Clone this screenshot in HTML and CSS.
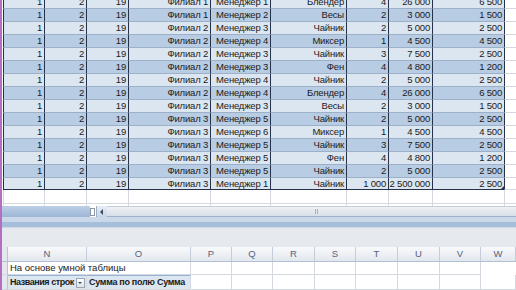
FILE: index.html
```html
<!DOCTYPE html>
<html>
<head>
<meta charset="utf-8">
<title>Сводная таблица</title>
<link rel="stylesheet" href="styles.css">
</head>
<body>
<div class="sheet">

  <div class="pane-top">
    <div class="tbl">
      <div class="tr odd"><div>1</div><div>2</div><div>19</div><div>Филиал 1</div><div>Менеджер 1</div><div>Блендер</div><div>4</div><div>26 000</div><div>6 500</div><div class="blank"></div></div>
      <div class="tr even"><div>1</div><div>2</div><div>19</div><div>Филиал 1</div><div>Менеджер 2</div><div>Весы</div><div>2</div><div>3 000</div><div>1 500</div><div class="blank"></div></div>
      <div class="tr odd"><div>1</div><div>2</div><div>19</div><div>Филиал 2</div><div>Менеджер 3</div><div>Чайник</div><div>2</div><div>5 000</div><div>2 500</div><div class="blank"></div></div>
      <div class="tr even"><div>1</div><div>2</div><div>19</div><div>Филиал 2</div><div>Менеджер 4</div><div>Миксер</div><div>1</div><div>4 500</div><div>4 500</div><div class="blank"></div></div>
      <div class="tr odd"><div>1</div><div>2</div><div>19</div><div>Филиал 2</div><div>Менеджер 3</div><div>Чайник</div><div>3</div><div>7 500</div><div>2 500</div><div class="blank"></div></div>
      <div class="tr even"><div>1</div><div>2</div><div>19</div><div>Филиал 2</div><div>Менеджер 3</div><div>Фен</div><div>4</div><div>4 800</div><div>1 200</div><div class="blank"></div></div>
      <div class="tr odd"><div>1</div><div>2</div><div>19</div><div>Филиал 2</div><div>Менеджер 4</div><div>Чайник</div><div>2</div><div>5 000</div><div>2 500</div><div class="blank"></div></div>
      <div class="tr even"><div>1</div><div>2</div><div>19</div><div>Филиал 2</div><div>Менеджер 4</div><div>Блендер</div><div>4</div><div>26 000</div><div>6 500</div><div class="blank"></div></div>
      <div class="tr odd"><div>1</div><div>2</div><div>19</div><div>Филиал 2</div><div>Менеджер 3</div><div>Весы</div><div>2</div><div>3 000</div><div>1 500</div><div class="blank"></div></div>
      <div class="tr even"><div>1</div><div>2</div><div>19</div><div>Филиал 3</div><div>Менеджер 5</div><div>Чайник</div><div>2</div><div>5 000</div><div>2 500</div><div class="blank"></div></div>
      <div class="tr odd"><div>1</div><div>2</div><div>19</div><div>Филиал 3</div><div>Менеджер 6</div><div>Миксер</div><div>1</div><div>4 500</div><div>4 500</div><div class="blank"></div></div>
      <div class="tr even"><div>1</div><div>2</div><div>19</div><div>Филиал 3</div><div>Менеджер 5</div><div>Чайник</div><div>3</div><div>7 500</div><div>2 500</div><div class="blank"></div></div>
      <div class="tr odd"><div>1</div><div>2</div><div>19</div><div>Филиал 3</div><div>Менеджер 5</div><div>Фен</div><div>4</div><div>4 800</div><div>1 200</div><div class="blank"></div></div>
      <div class="tr even"><div>1</div><div>2</div><div>19</div><div>Филиал 3</div><div>Менеджер 5</div><div>Чайник</div><div>2</div><div>5 000</div><div>2 500</div><div class="blank"></div></div>
      <div class="tr odd last"><div>1</div><div>2</div><div>19</div><div>Филиал 3</div><div>Менеджер 1</div><div>Чайник</div><div>1 000</div><div>2 500 000</div><div class="corner">2 500</div><div class="blank"></div></div>
      <div class="tr empty"><div></div><div></div><div></div><div></div><div></div><div></div><div></div><div></div><div></div><div></div></div>
      <div class="tr empty"><div></div><div></div><div></div><div></div><div></div><div></div><div></div><div></div><div></div><div></div></div>
    </div>
  </div>

  <div class="hscroll">
    <div class="tabs"></div>
    <div class="splitter"></div>
    <div class="arrow"></div>
    <div class="track"><span class="grip"></span></div>
  </div>
  <div class="band-light"></div>
  <div class="band-blue"></div>
  <div class="band-grey"></div>

  <div class="pane-bottom">
    <div class="colheads">
      <div class="rh"></div>
      <div>N</div><div>O</div><div>P</div><div>Q</div><div>R</div><div>S</div><div>T</div><div>U</div><div>V</div><div>W</div>
    </div>
    <div class="grow">
      <div class="rh"></div>
      <div class="wide">На основе умной таблицы</div><div></div><div></div><div></div><div></div><div></div><div></div><div></div><div></div>
    </div>
    <div class="grow pivot">
      <div class="rh"></div>
      <div class="hd first"><span class="lbl">Названия строк</span><span class="dd"></span></div><div class="hd">Сумма по полю Сумма</div><div></div><div></div><div></div><div></div><div></div><div></div><div></div><div></div>
    </div>
  </div>

</div>
</body>
</html>
```

FILE: styles.css
```css
body {
  margin: 0;
  background: #ffffff;
  font-family: "Liberation Sans", Arial, sans-serif;
  font-size: 9.5px;
  color: #1b1b1b;
  overflow: hidden;
}

.sheet {
  width: 514px;
  height: 290px;
  border-left: 2px solid #b46fc0;
  overflow: hidden;
}

/* upper pane: the smart table */
.pane-top {
  height: 206px;
  overflow: hidden;
  padding-left: 1px;
  background: #ffffff;
}

.tbl {
  margin-top: -4px;
}

.tr {
  display: grid;
  grid-template-columns: 41px 42px 42px 82px 60px 76px 42px 44px 72px 1fr;
  height: 13px;
}

.tr > div {
  box-sizing: border-box;
  border-left: 1px solid #25324a;
  border-bottom: 1px solid #9cb0ca;
  padding-right: 2px;
  text-align: right;
  line-height: 12px;
  white-space: nowrap;
  overflow: hidden;
  letter-spacing: -0.2px;
}

.tr.odd > div { background: #dce6f1; }
.tr.even > div { background: #b8cce4; }
.tr.last > div { border-bottom-color: #25324a; }
.tr.last { height: 12px; }

.tr > div.blank {
  background: #ffffff;
  border-bottom-color: #d4d9e0;
}

.tr.empty > div {
  background: #ffffff;
  border-left-color: #d4d9e0;
  border-bottom-color: #d4d9e0;
}
.tr.empty { height: 14px; }

.corner { position: relative; }
.corner::after {
  content: "";
  position: absolute;
  right: 0;
  bottom: 0;
  border-left: 3px solid transparent;
  border-bottom: 3px solid #25324a;
}

/* scroll strip and window chrome between panes */
.hscroll {
  display: flex;
  height: 11px;
}
.tabs {
  width: 88px;
  background: linear-gradient(#bccfe6, #9db6d6);
}
.splitter {
  width: 3px;
  margin: 2px 1px 1px 0;
  border: 1px solid #8c98a8;
  background: #ffffff;
}
.arrow {
  width: 10px;
  background: linear-gradient(#e6edf6, #c7d5e6);
  border-left: 1px solid #9aaec6;
  position: relative;
}
.arrow::after {
  content: "";
  position: absolute;
  left: 3px;
  top: 3px;
  border-top: 3px solid transparent;
  border-bottom: 3px solid transparent;
  border-right: 3px solid #3c4a5e;
}
.track {
  flex: 1;
  background: linear-gradient(#eef1f5, #d9dfe7);
  border-top: 1px solid #c3ccd8;
  border-bottom: 1px solid #9fb2ca;
  position: relative;
}
.grip {
  position: absolute;
  left: 208px;
  top: 2px;
  width: 4px;
  height: 5px;
  background: repeating-linear-gradient(90deg, #a9b3c0 0 1px, transparent 1px 2px);
}

.band-light { height: 5px; background: #cad8ea; }
.band-blue { height: 5px; background: #a7bedb; }
.band-grey { height: 19px; background: #e6e9ee; border-top: 1px solid #d0d8e3; }

/* lower pane: pivot table */
.colheads,
.grow {
  display: grid;
  grid-template-columns: 6px 79px 104px 41px 41px 42px 41px 42px 42px 41px 1fr;
}

.colheads {
  height: 14px;
  background: linear-gradient(#f8f9fb, #e2e7ee);
  border-bottom: 1px solid #b3c0d1;
  color: #56627a;
}
.colheads > div {
  border-right: 1px solid #c4ccd7;
  text-align: center;
  line-height: 14px;
}

.grow { height: 13px; }
.grow > div {
  border-right: 1px solid #d4d9e0;
  border-bottom: 1px solid #d4d9e0;
  line-height: 12px;
  white-space: nowrap;
  padding-left: 2px;
}
.grow > .rh,
.colheads > .rh {
  background: #e4e8ee;
  border-right: 1px solid #b9c3d0;
  padding: 0;
}
.grow .wide {
  overflow: visible;
  border-right-color: transparent;
}

.pivot { height: 14px; }
.pivot > div { line-height: 13px; }
.pivot .hd {
  background: #dce6f1;
  border-top: 1px solid #95b3d7;
  font-weight: bold;
  font-size: 9px;
  letter-spacing: -0.3px;
}
.pivot .first {
  display: flex;
  align-items: center;
  justify-content: space-between;
  padding-right: 1px;
  letter-spacing: -0.45px;
}
.lbl {
  flex-shrink: 0;
}
.dd {
  flex-shrink: 0;
  width: 7px;
  height: 8px;
  border: 1px solid #9ca6b3;
  background: linear-gradient(#ffffff, #dde2e9);
  position: relative;
}
.dd::after {
  content: "";
  position: absolute;
  left: 1px;
  top: 3px;
  border-left: 2.5px solid transparent;
  border-right: 2.5px solid transparent;
  border-top: 2.5px solid #3c4656;
}
```
